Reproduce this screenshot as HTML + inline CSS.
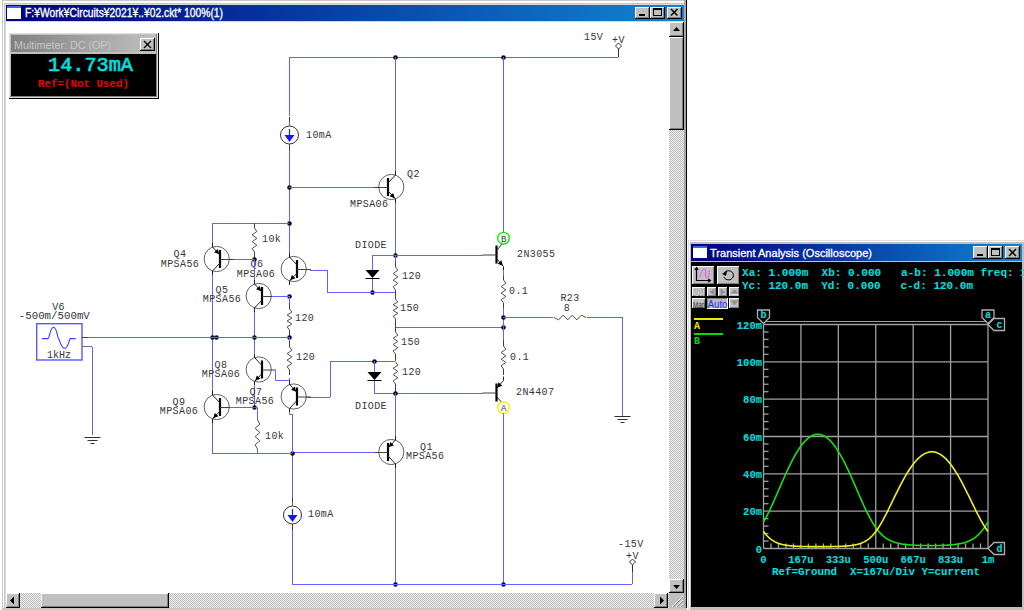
<!DOCTYPE html>
<html><head><meta charset="utf-8"><style>html,body{margin:0;padding:0;width:1024px;height:610px;overflow:hidden;background:#fff}svg{display:block} text{white-space:pre}</style></head>
<body><svg width="1024" height="610" viewBox="0 0 1024 610" shape-rendering="auto">
<rect x="0" y="0" width="1024" height="610" fill="#ffffff" />
<rect x="2" y="0" width="685" height="610" fill="#c8c8c8" />
<rect x="3" y="1" width="682" height="609" fill="#ffffff" />
<rect x="4" y="3" width="681" height="607" fill="#c8c8c8" />
<rect x="5" y="4" width="679" height="606" fill="#d8d8d8" />
<line x1="686.5" y1="0" x2="686.5" y2="610" stroke="#000" stroke-width="1" />
<rect x="684" y="0" width="2" height="610" fill="#a8a8a8" />
<defs><linearGradient id="tg" x1="0" x2="1" y1="0" y2="0"><stop offset="0" stop-color="#000080"/><stop offset="1" stop-color="#1084d0"/></linearGradient><linearGradient id="mg" x1="0" x2="1" y1="0" y2="0"><stop offset="0" stop-color="#808080"/><stop offset="1" stop-color="#c0c0c0"/></linearGradient><pattern id="dith" width="2" height="2" patternUnits="userSpaceOnUse"><rect width="2" height="2" fill="#f0f0f0"/><rect width="1" height="1" fill="#bcbcbc"/><rect x="1" y="1" width="1" height="1" fill="#bcbcbc"/></pattern></defs>
<rect x="6" y="5" width="678" height="16" fill="url(#tg)" />
<rect x="7" y="6" width="14" height="13" fill="#ffffff" />
<rect x="7" y="6" width="14" height="2" fill="#3a6ad8" />
<text x="25" y="16.6" font-family="Liberation Sans" font-size="12" fill="#ffffff" font-weight="normal" text-anchor="start" textLength="198" lengthAdjust="spacingAndGlyphs" stroke="#ffffff" stroke-width="0.35">F:¥Work¥Circuits¥2021¥..¥02.ckt* 100%(1)</text>
<rect x="635" y="7" width="15" height="12" fill="#000000" />
<rect x="635" y="7" width="14" height="11" fill="#ffffff" />
<rect x="636" y="8" width="13" height="10" fill="#808080" />
<rect x="636" y="8" width="12" height="9" fill="#c0c0c0" />
<rect x="639" y="14" width="6" height="2" fill="#000" />
<rect x="650" y="7" width="15" height="12" fill="#000000" />
<rect x="650" y="7" width="14" height="11" fill="#ffffff" />
<rect x="651" y="8" width="13" height="10" fill="#808080" />
<rect x="651" y="8" width="12" height="9" fill="#c0c0c0" />
<rect x="653" y="8" width="9" height="8" fill="#000" />
<rect x="654" y="10" width="7" height="5" fill="#c0c0c0" />
<rect x="667" y="7" width="15" height="12" fill="#000000" />
<rect x="667" y="7" width="14" height="11" fill="#ffffff" />
<rect x="668" y="8" width="13" height="10" fill="#808080" />
<rect x="668" y="8" width="12" height="9" fill="#c0c0c0" />
<line x1="671" y1="9" x2="677.5" y2="15.5" stroke="#000" stroke-width="1.5" />
<line x1="677.5" y1="9" x2="671" y2="15.5" stroke="#000" stroke-width="1.5" />
<rect x="6" y="22" width="663" height="571" fill="#ffffff" />
<rect x="669" y="22" width="15" height="571" fill="url(#dith)" />
<rect x="669" y="22" width="15" height="15" fill="#000000" />
<rect x="669" y="22" width="14" height="14" fill="#ffffff" />
<rect x="670" y="23" width="13" height="13" fill="#808080" />
<rect x="670" y="23" width="12" height="12" fill="#c0c0c0" />
<polygon points="676.5,27 680,31 673,31" fill="#000"/>
<rect x="669" y="37" width="15" height="93" fill="#000000" />
<rect x="669" y="37" width="14" height="92" fill="#ffffff" />
<rect x="670" y="38" width="13" height="91" fill="#808080" />
<rect x="670" y="38" width="12" height="90" fill="#c0c0c0" />
<rect x="669" y="579" width="15" height="14" fill="#000000" />
<rect x="669" y="579" width="14" height="13" fill="#ffffff" />
<rect x="670" y="580" width="13" height="12" fill="#808080" />
<rect x="670" y="580" width="12" height="11" fill="#c0c0c0" />
<polygon points="676.5,589 680,585 673,585" fill="#000"/>
<rect x="6" y="593" width="663" height="15" fill="url(#dith)" />
<rect x="6" y="593" width="14" height="15" fill="#000000" />
<rect x="6" y="593" width="13" height="14" fill="#ffffff" />
<rect x="7" y="594" width="12" height="13" fill="#808080" />
<rect x="7" y="594" width="11" height="12" fill="#c0c0c0" />
<polygon points="10,600.5 14,596.5 14,604.5" fill="#000"/>
<rect x="41" y="593" width="128" height="15" fill="#000000" />
<rect x="41" y="593" width="127" height="14" fill="#ffffff" />
<rect x="42" y="594" width="126" height="13" fill="#808080" />
<rect x="42" y="594" width="125" height="12" fill="#c0c0c0" />
<rect x="654" y="593" width="14" height="15" fill="#000000" />
<rect x="654" y="593" width="13" height="14" fill="#ffffff" />
<rect x="655" y="594" width="12" height="13" fill="#808080" />
<rect x="655" y="594" width="11" height="12" fill="#c0c0c0" />
<polygon points="664,600.5 660,596.5 660,604.5" fill="#000"/>
<rect x="669" y="593" width="15" height="15" fill="#c0c0c0" />
<line x1="672" y1="607" x2="683" y2="596" stroke="#ffffff" stroke-width="1" />
<line x1="673" y1="607" x2="683" y2="597" stroke="#808080" stroke-width="1" />
<line x1="676" y1="607" x2="683" y2="600" stroke="#ffffff" stroke-width="1" />
<line x1="677" y1="607" x2="683" y2="601" stroke="#808080" stroke-width="1" />
<line x1="680" y1="607" x2="683" y2="604" stroke="#ffffff" stroke-width="1" />
<line x1="681" y1="607" x2="683" y2="605" stroke="#808080" stroke-width="1" />
<rect x="2" y="608" width="685" height="2" fill="#c8c8c8" />
<line x1="289" y1="57.5" x2="618" y2="57.5" stroke="#6262ff" stroke-width="1" />
<circle cx="395.5" cy="57.5" r="2.3" fill="#08082a"/>
<circle cx="503.5" cy="57.5" r="2.3" fill="#08082a"/>
<polygon points="618.5,43 621.5,46 618.5,49 615.5,46" fill="#fff" stroke="#303030" stroke-width="1"/>
<line x1="618.5" y1="49" x2="618.5" y2="57" stroke="#303030" stroke-width="1" />
<text x="584" y="39.5" font-family="Liberation Mono" font-size="10" fill="#363636" font-weight="normal" text-anchor="start"  letter-spacing="0.4">15V</text>
<text x="612" y="42.5" font-family="Liberation Mono" font-size="10" fill="#363636" font-weight="normal" text-anchor="start"  letter-spacing="0.4">+V</text>
<line x1="289.5" y1="57" x2="289.5" y2="116" stroke="#6262ff" stroke-width="1" />
<circle cx="289.5" cy="135" r="9" fill="none" stroke="#303030" stroke-width="1"/>
<line x1="289.5" y1="129" x2="289.5" y2="135" stroke="#2020ff" stroke-width="1.2" />
<polygon points="284.5,135 294.5,135 289.5,142" fill="#1414ff"/>
<line x1="289.5" y1="126" x2="289.5" y2="117" stroke="#404040" stroke-width="1" />
<line x1="289.5" y1="126" x2="289.5" y2="122" stroke="#e04040" stroke-width="1" />
<line x1="289.5" y1="144" x2="289.5" y2="150" stroke="#404040" stroke-width="1" />
<text x="306" y="137.5" font-family="Liberation Mono" font-size="10" fill="#363636" font-weight="normal" text-anchor="start"  letter-spacing="0.4">10mA</text>
<line x1="289.5" y1="150" x2="289.5" y2="253" stroke="#6262ff" stroke-width="1" />
<circle cx="289.5" cy="187.5" r="2.3" fill="#08082a"/>
<circle cx="289.5" cy="223.5" r="2.3" fill="#08082a"/>
<line x1="289" y1="187.5" x2="375" y2="187.5" stroke="#6262ff" stroke-width="1" />
<circle cx="391.3" cy="187" r="12.6" fill="none" stroke="#606060" stroke-width="1"/>
<line x1="388.0" y1="178" x2="388.0" y2="196" stroke="#000" stroke-width="2.2" />
<line x1="388.0" y1="187.5" x2="374.0" y2="187.5" stroke="#404040" stroke-width="1" />
<line x1="388.0" y1="183" x2="395.5" y2="175" stroke="#202020" stroke-width="1" />
<line x1="395.5" y1="175" x2="395.5" y2="171" stroke="#202020" stroke-width="1" />
<line x1="388.0" y1="191" x2="395.5" y2="199" stroke="#202020" stroke-width="1" />
<line x1="395.5" y1="199" x2="395.5" y2="203" stroke="#202020" stroke-width="1" />
<polygon points="394.8160588711187,198.2704627958599 389.5725102163618,196.3326295973628 393.2201962370623,192.91292395295616" fill="#000"/>
<text x="407" y="176.5" font-family="Liberation Mono" font-size="10" fill="#363636" font-weight="normal" text-anchor="start"  letter-spacing="0.4">Q2</text>
<text x="350" y="206.5" font-family="Liberation Mono" font-size="10" fill="#363636" font-weight="normal" text-anchor="start"  letter-spacing="0.4">MPSA06</text>
<line x1="395.5" y1="57" x2="395.5" y2="171" stroke="#6262ff" stroke-width="1" />
<line x1="395.5" y1="203" x2="395.5" y2="255" stroke="#6262ff" stroke-width="1" />
<circle cx="395.5" cy="255.5" r="2.3" fill="#08082a"/>
<line x1="372" y1="255.5" x2="483" y2="255.5" stroke="#6262ff" stroke-width="1" />
<line x1="372.5" y1="255" x2="372.5" y2="270" stroke="#6262ff" stroke-width="1" />
<polygon points="365.5,270 379.5,270 372.5,278" fill="#000"/>
<line x1="365.5" y1="278.5" x2="379.5" y2="278.5" stroke="#000" stroke-width="1" />
<line x1="372.5" y1="279" x2="372.5" y2="292" stroke="#6262ff" stroke-width="1" />
<circle cx="372.5" cy="292.5" r="2.3" fill="#08082a"/>
<line x1="395.5" y1="255" x2="395.5" y2="261" stroke="#6262ff" stroke-width="1" />
<line x1="395.5" y1="261" x2="395.5" y2="267" stroke="#404040" stroke-width="1" />
<polyline points="395.5,267 397.9,270.2857142857143 393.1,273.57142857142856 397.9,276.85714285714283 393.1,280.14285714285717 397.9,283.42857142857144 393.1,286.7142857142857 395.5,290" stroke="#505050" stroke-width="1" fill="none" />
<line x1="395.5" y1="290" x2="395.5" y2="292" stroke="#404040" stroke-width="1" />
<text x="402" y="278.5" font-family="Liberation Mono" font-size="10" fill="#363636" font-weight="normal" text-anchor="start"  letter-spacing="0.4">120</text>
<line x1="327" y1="292.5" x2="395" y2="292.5" stroke="#6262ff" stroke-width="1" />
<line x1="327.5" y1="270" x2="327.5" y2="292" stroke="#6262ff" stroke-width="1" />
<line x1="310" y1="270.5" x2="327" y2="270.5" stroke="#6262ff" stroke-width="1" />
<line x1="395.5" y1="292" x2="395.5" y2="299" stroke="#404040" stroke-width="1" />
<polyline points="395.5,299 397.9,301.85714285714283 393.1,304.7142857142857 397.9,307.57142857142856 393.1,310.42857142857144 397.9,313.2857142857143 393.1,316.14285714285717 395.5,319" stroke="#505050" stroke-width="1" fill="none" />
<line x1="395.5" y1="319" x2="395.5" y2="327" stroke="#404040" stroke-width="1" />
<text x="400" y="310.5" font-family="Liberation Mono" font-size="10" fill="#363636" font-weight="normal" text-anchor="start"  letter-spacing="0.4">150</text>
<line x1="395" y1="327.5" x2="503" y2="327.5" stroke="#6262ff" stroke-width="1" />
<circle cx="503.5" cy="327.5" r="2.3" fill="#08082a"/>
<line x1="395.5" y1="327" x2="395.5" y2="332" stroke="#404040" stroke-width="1" />
<polyline points="395.5,332 397.9,335.14285714285717 393.1,338.2857142857143 397.9,341.42857142857144 393.1,344.57142857142856 397.9,347.7142857142857 393.1,350.85714285714283 395.5,354" stroke="#505050" stroke-width="1" fill="none" />
<line x1="395.5" y1="354" x2="395.5" y2="361" stroke="#404040" stroke-width="1" />
<text x="401" y="344.5" font-family="Liberation Mono" font-size="10" fill="#363636" font-weight="normal" text-anchor="start"  letter-spacing="0.4">150</text>
<line x1="330" y1="361.5" x2="395" y2="361.5" stroke="#6262ff" stroke-width="1" />
<circle cx="374.5" cy="361.5" r="2.3" fill="#08082a"/>
<line x1="330.5" y1="361" x2="330.5" y2="397" stroke="#6262ff" stroke-width="1" />
<line x1="306" y1="397.5" x2="330" y2="397.5" stroke="#6262ff" stroke-width="1" />
<line x1="374.5" y1="361" x2="374.5" y2="372" stroke="#6262ff" stroke-width="1" />
<polygon points="367.5,372 381.5,372 374.5,380" fill="#000"/>
<line x1="367.5" y1="380.5" x2="381.5" y2="380.5" stroke="#000" stroke-width="1" />
<line x1="374.5" y1="381" x2="374.5" y2="393" stroke="#6262ff" stroke-width="1" />
<polyline points="395.5,362 397.9,365.14285714285717 393.1,368.2857142857143 397.9,371.42857142857144 393.1,374.57142857142856 397.9,377.7142857142857 393.1,380.85714285714283 395.5,384" stroke="#505050" stroke-width="1" fill="none" />
<line x1="395.5" y1="384" x2="395.5" y2="393" stroke="#404040" stroke-width="1" />
<text x="402" y="374.5" font-family="Liberation Mono" font-size="10" fill="#363636" font-weight="normal" text-anchor="start"  letter-spacing="0.4">120</text>
<line x1="374" y1="393.5" x2="483" y2="393.5" stroke="#6262ff" stroke-width="1" />
<circle cx="395.5" cy="393.5" r="2.3" fill="#08082a"/>
<text x="355" y="408.5" font-family="Liberation Mono" font-size="10" fill="#363636" font-weight="normal" text-anchor="start"  letter-spacing="0.4">DIODE</text>
<text x="355" y="247.5" font-family="Liberation Mono" font-size="10" fill="#363636" font-weight="normal" text-anchor="start"  letter-spacing="0.4">DIODE</text>
<line x1="395.5" y1="393" x2="395.5" y2="436" stroke="#6262ff" stroke-width="1" />
<circle cx="391.3" cy="452" r="12.6" fill="none" stroke="#606060" stroke-width="1"/>
<line x1="388.0" y1="443" x2="388.0" y2="461" stroke="#000" stroke-width="2.2" />
<line x1="388.0" y1="452.5" x2="374.0" y2="452.5" stroke="#404040" stroke-width="1" />
<line x1="388.0" y1="448" x2="395.5" y2="440" stroke="#202020" stroke-width="1" />
<line x1="395.5" y1="440" x2="395.5" y2="436" stroke="#202020" stroke-width="1" />
<line x1="388.0" y1="456" x2="395.5" y2="464" stroke="#202020" stroke-width="1" />
<line x1="395.5" y1="464" x2="395.5" y2="468" stroke="#202020" stroke-width="1" />
<polygon points="388.6839411288813,447.27046279585994 390.2798037629377,441.9129239529562 393.9274897836382,445.3326295973629" fill="#000"/>
<text x="420" y="449.5" font-family="Liberation Mono" font-size="10" fill="#363636" font-weight="normal" text-anchor="start"  letter-spacing="0.4">Q1</text>
<text x="406" y="458.5" font-family="Liberation Mono" font-size="10" fill="#363636" font-weight="normal" text-anchor="start"  letter-spacing="0.4">MPSA56</text>
<line x1="292" y1="452.5" x2="375" y2="452.5" stroke="#6262ff" stroke-width="1" />
<line x1="395.5" y1="468" x2="395.5" y2="584" stroke="#6262ff" stroke-width="1" />
<circle cx="395.5" cy="584.5" r="2.3" fill="#08082a"/>
<line x1="503.5" y1="57" x2="503.5" y2="232" stroke="#6262ff" stroke-width="1" />
<line x1="496.5" y1="245.5" x2="496.5" y2="263.5" stroke="#000" stroke-width="2.2" />
<line x1="496.5" y1="255.0" x2="482.5" y2="255.0" stroke="#404040" stroke-width="1" />
<line x1="496.5" y1="250.5" x2="503.5" y2="242.5" stroke="#202020" stroke-width="1" />
<line x1="503.5" y1="242.5" x2="503.5" y2="238.5" stroke="#202020" stroke-width="1" />
<line x1="496.5" y1="258.5" x2="503.5" y2="266.5" stroke="#202020" stroke-width="1" />
<line x1="503.5" y1="266.5" x2="503.5" y2="270.5" stroke="#202020" stroke-width="1" />
<polygon points="502.8414953921315,265.7474233052931 497.6675306160217,263.63080135143 501.4304140895561,260.3382783120875" fill="#000"/>
<circle cx="503.5" cy="238.2" r="5.8" fill="#fff" stroke="#10f010" stroke-width="1.4"/>
<text x="503.8" y="241.5" font-family="Liberation Mono" font-size="9" fill="#363636" font-weight="normal" text-anchor="middle" >B</text>
<text x="517" y="256.5" font-family="Liberation Mono" font-size="10" fill="#363636" font-weight="normal" text-anchor="start"  letter-spacing="0.4">2N3055</text>
<line x1="503.5" y1="271" x2="503.5" y2="276" stroke="#6262ff" stroke-width="1" />
<line x1="503.5" y1="276" x2="503.5" y2="280" stroke="#404040" stroke-width="1" />
<polyline points="503.5,280 505.9,283.2857142857143 501.1,286.57142857142856 505.9,289.85714285714283 501.1,293.14285714285717 505.9,296.42857142857144 501.1,299.7142857142857 503.5,303" stroke="#505050" stroke-width="1" fill="none" />
<line x1="503.5" y1="303" x2="503.5" y2="308" stroke="#404040" stroke-width="1" />
<text x="509" y="293.5" font-family="Liberation Mono" font-size="10" fill="#363636" font-weight="normal" text-anchor="start"  letter-spacing="0.4">0.1</text>
<line x1="503.5" y1="308" x2="503.5" y2="340" stroke="#6262ff" stroke-width="1" />
<circle cx="503.5" cy="317.5" r="2.3" fill="#08082a"/>
<line x1="503" y1="317.5" x2="553" y2="317.5" stroke="#6262ff" stroke-width="1" />
<polyline points="554,317.5 558.5714285714286,319.9 563.1428571428571,315.1 567.7142857142857,319.9 572.2857142857143,315.1 576.8571428571429,319.9 581.4285714285714,315.1 586,317.5" stroke="#505050" stroke-width="1" fill="none" />
<line x1="587" y1="317.5" x2="622" y2="317.5" stroke="#6262ff" stroke-width="1" />
<text x="570" y="300.5" font-family="Liberation Mono" font-size="10" fill="#363636" font-weight="normal" text-anchor="middle"  letter-spacing="0.4">R23</text>
<text x="567" y="310.5" font-family="Liberation Mono" font-size="10" fill="#363636" font-weight="normal" text-anchor="middle"  letter-spacing="0.4">8</text>
<line x1="622.5" y1="317" x2="622.5" y2="417" stroke="#6262ff" stroke-width="1" />
<line x1="614.5" y1="416.5" x2="630.5" y2="416.5" stroke="#303030" stroke-width="1" />
<line x1="617.5" y1="419.5" x2="627.5" y2="419.5" stroke="#303030" stroke-width="1" />
<line x1="620.5" y1="422.5" x2="624.5" y2="422.5" stroke="#303030" stroke-width="1" />
<line x1="503.5" y1="340" x2="503.5" y2="346" stroke="#404040" stroke-width="1" />
<polyline points="503.5,346 505.9,349.2857142857143 501.1,352.57142857142856 505.9,355.85714285714283 501.1,359.14285714285717 505.9,362.42857142857144 501.1,365.7142857142857 503.5,369" stroke="#505050" stroke-width="1" fill="none" />
<line x1="503.5" y1="369" x2="503.5" y2="375" stroke="#404040" stroke-width="1" />
<text x="510" y="359.5" font-family="Liberation Mono" font-size="10" fill="#363636" font-weight="normal" text-anchor="start"  letter-spacing="0.4">0.1</text>
<line x1="496.5" y1="383.5" x2="496.5" y2="401.5" stroke="#000" stroke-width="2.2" />
<line x1="496.5" y1="393.0" x2="482.5" y2="393.0" stroke="#404040" stroke-width="1" />
<line x1="496.5" y1="388.5" x2="503.5" y2="380.5" stroke="#202020" stroke-width="1" />
<line x1="503.5" y1="380.5" x2="503.5" y2="376.5" stroke="#202020" stroke-width="1" />
<line x1="496.5" y1="396.5" x2="503.5" y2="404.5" stroke="#202020" stroke-width="1" />
<line x1="503.5" y1="404.5" x2="503.5" y2="408.5" stroke="#202020" stroke-width="1" />
<polygon points="497.1585046078685,387.7474233052931 498.5695859104439,382.3382783120875 502.3324693839783,385.63080135143" fill="#000"/>
<text x="516" y="394.5" font-family="Liberation Mono" font-size="10" fill="#363636" font-weight="normal" text-anchor="start"  letter-spacing="0.4">2N4407</text>
<circle cx="503.5" cy="407.6" r="5.8" fill="#fff" stroke="#f0f000" stroke-width="1.4"/>
<text x="503.8" y="411" font-family="Liberation Mono" font-size="9" fill="#363636" font-weight="normal" text-anchor="middle" >A</text>
<line x1="503.5" y1="413" x2="503.5" y2="584" stroke="#6262ff" stroke-width="1" />
<circle cx="503.5" cy="584.5" r="2.3" fill="#08082a"/>
<line x1="292" y1="584.5" x2="632" y2="584.5" stroke="#6262ff" stroke-width="1" />
<line x1="632.5" y1="572" x2="632.5" y2="584" stroke="#6262ff" stroke-width="1" />
<line x1="632.5" y1="565" x2="632.5" y2="572" stroke="#303030" stroke-width="1" />
<polygon points="632.5,559 635.5,562 632.5,565 629.5,562" fill="#fff" stroke="#303030" stroke-width="1"/>
<text x="618" y="546.5" font-family="Liberation Mono" font-size="10" fill="#363636" font-weight="normal" text-anchor="start"  letter-spacing="0.4">-15V</text>
<text x="626" y="558.5" font-family="Liberation Mono" font-size="10" fill="#363636" font-weight="normal" text-anchor="start"  letter-spacing="0.4">+V</text>
<line x1="292.5" y1="414" x2="292.5" y2="499" stroke="#6262ff" stroke-width="1" />
<circle cx="292.5" cy="515" r="9" fill="none" stroke="#303030" stroke-width="1"/>
<line x1="292.5" y1="509" x2="292.5" y2="515" stroke="#2020ff" stroke-width="1.2" />
<polygon points="287.5,515 297.5,515 292.5,522" fill="#1414ff"/>
<line x1="292.5" y1="506" x2="292.5" y2="497" stroke="#404040" stroke-width="1" />
<line x1="292.5" y1="506" x2="292.5" y2="502" stroke="#e04040" stroke-width="1" />
<line x1="292.5" y1="524" x2="292.5" y2="530" stroke="#404040" stroke-width="1" />
<text x="308" y="516.5" font-family="Liberation Mono" font-size="10" fill="#363636" font-weight="normal" text-anchor="start"  letter-spacing="0.4">10mA</text>
<line x1="292.5" y1="530" x2="292.5" y2="584" stroke="#6262ff" stroke-width="1" />
<circle cx="292.5" cy="453.5" r="2.3" fill="#08082a"/>
<line x1="212" y1="223.5" x2="289" y2="223.5" stroke="#6262ff" stroke-width="1" />
<polyline points="254.5,228 256.9,231.42857142857142 252.1,234.85714285714286 256.9,238.28571428571428 252.1,241.71428571428572 256.9,245.14285714285714 252.1,248.57142857142856 254.5,252" stroke="#505050" stroke-width="1" fill="none" />
<line x1="254.5" y1="252" x2="254.5" y2="259" stroke="#404040" stroke-width="1" />
<text x="262" y="241.5" font-family="Liberation Mono" font-size="10" fill="#363636" font-weight="normal" text-anchor="start"  letter-spacing="0.4">10k</text>
<line x1="254.5" y1="223" x2="254.5" y2="228" stroke="#404040" stroke-width="1" />
<circle cx="254.5" cy="259.5" r="2.3" fill="#08082a"/>
<circle cx="216.7" cy="259" r="12.6" fill="none" stroke="#606060" stroke-width="1"/>
<line x1="220.0" y1="250" x2="220.0" y2="268" stroke="#000" stroke-width="2.2" />
<line x1="220.0" y1="259.5" x2="234.0" y2="259.5" stroke="#404040" stroke-width="1" />
<line x1="220.0" y1="255" x2="212.5" y2="247" stroke="#202020" stroke-width="1" />
<line x1="212.5" y1="247" x2="212.5" y2="243" stroke="#202020" stroke-width="1" />
<line x1="220.0" y1="263" x2="212.5" y2="271" stroke="#202020" stroke-width="1" />
<line x1="212.5" y1="271" x2="212.5" y2="275" stroke="#202020" stroke-width="1" />
<polygon points="219.31605887111866,254.2704627958599 214.0725102163618,252.3326295973628 217.7201962370622,248.91292395295616" fill="#000"/>
<text x="180" y="256.5" font-family="Liberation Mono" font-size="10" fill="#363636" font-weight="normal" text-anchor="middle"  letter-spacing="0.4">Q4</text>
<text x="180" y="266.5" font-family="Liberation Mono" font-size="10" fill="#363636" font-weight="normal" text-anchor="middle"  letter-spacing="0.4">MPSA56</text>
<line x1="234" y1="259.5" x2="254" y2="259.5" stroke="#6262ff" stroke-width="1" />
<line x1="212.5" y1="223" x2="212.5" y2="243" stroke="#6262ff" stroke-width="1" />
<line x1="212.5" y1="275" x2="212.5" y2="391" stroke="#6262ff" stroke-width="1" />
<circle cx="212.5" cy="337.5" r="2.3" fill="#08082a"/>
<circle cx="216.5" cy="337.5" r="2.3" fill="#08082a"/>
<circle cx="293.7" cy="269" r="12.6" fill="none" stroke="#606060" stroke-width="1"/>
<line x1="297.0" y1="260" x2="297.0" y2="278" stroke="#000" stroke-width="2.2" />
<line x1="297.0" y1="269.5" x2="311.0" y2="269.5" stroke="#404040" stroke-width="1" />
<line x1="297.0" y1="265" x2="289.5" y2="257" stroke="#202020" stroke-width="1" />
<line x1="289.5" y1="257" x2="289.5" y2="253" stroke="#202020" stroke-width="1" />
<line x1="297.0" y1="273" x2="289.5" y2="281" stroke="#202020" stroke-width="1" />
<line x1="289.5" y1="281" x2="289.5" y2="285" stroke="#202020" stroke-width="1" />
<polygon points="290.1839411288813,280.27046279585994 291.7798037629377,274.9129239529562 295.4274897836382,278.3326295973629" fill="#000"/>
<text x="257" y="266.5" font-family="Liberation Mono" font-size="10" fill="#363636" font-weight="normal" text-anchor="middle"  letter-spacing="0.4">Q6</text>
<text x="256" y="276.5" font-family="Liberation Mono" font-size="10" fill="#363636" font-weight="normal" text-anchor="middle"  letter-spacing="0.4">MPSA06</text>
<circle cx="289.5" cy="296.5" r="2.3" fill="#08082a"/>
<line x1="289.5" y1="296" x2="289.5" y2="303" stroke="#6262ff" stroke-width="1" />
<line x1="289.5" y1="303" x2="289.5" y2="309" stroke="#404040" stroke-width="1" />
<polyline points="289.5,309 291.9,312.0 287.1,315.0 291.9,318.0 287.1,321.0 291.9,324.0 287.1,327.0 289.5,330" stroke="#505050" stroke-width="1" fill="none" />
<line x1="289.5" y1="330" x2="289.5" y2="337" stroke="#404040" stroke-width="1" />
<text x="295" y="320.5" font-family="Liberation Mono" font-size="10" fill="#363636" font-weight="normal" text-anchor="start"  letter-spacing="0.4">120</text>
<circle cx="289.5" cy="337.5" r="2.3" fill="#08082a"/>
<line x1="289.5" y1="337" x2="289.5" y2="341" stroke="#6262ff" stroke-width="1" />
<line x1="289.5" y1="341" x2="289.5" y2="347" stroke="#404040" stroke-width="1" />
<polyline points="289.5,347 291.9,350.2857142857143 287.1,353.57142857142856 291.9,356.85714285714283 287.1,360.14285714285717 291.9,363.42857142857144 287.1,366.7142857142857 289.5,370" stroke="#505050" stroke-width="1" fill="none" />
<line x1="289.5" y1="370" x2="289.5" y2="375" stroke="#404040" stroke-width="1" />
<text x="296" y="359.5" font-family="Liberation Mono" font-size="10" fill="#363636" font-weight="normal" text-anchor="start"  letter-spacing="0.4">120</text>
<line x1="289.5" y1="378" x2="289.5" y2="381" stroke="#6262ff" stroke-width="1" />
<line x1="254.5" y1="259" x2="254.5" y2="280" stroke="#6262ff" stroke-width="1" />
<circle cx="258.7" cy="296" r="12.6" fill="none" stroke="#606060" stroke-width="1"/>
<line x1="262.0" y1="287" x2="262.0" y2="305" stroke="#000" stroke-width="2.2" />
<line x1="262.0" y1="296.5" x2="276.0" y2="296.5" stroke="#404040" stroke-width="1" />
<line x1="262.0" y1="292" x2="254.5" y2="284" stroke="#202020" stroke-width="1" />
<line x1="254.5" y1="284" x2="254.5" y2="280" stroke="#202020" stroke-width="1" />
<line x1="262.0" y1="300" x2="254.5" y2="308" stroke="#202020" stroke-width="1" />
<line x1="254.5" y1="308" x2="254.5" y2="312" stroke="#202020" stroke-width="1" />
<polygon points="261.3160588711187,291.27046279585994 256.0725102163618,289.3326295973629 259.7201962370623,285.9129239529562" fill="#000"/>
<line x1="272" y1="296.5" x2="289" y2="296.5" stroke="#6262ff" stroke-width="1" />
<text x="222" y="292.5" font-family="Liberation Mono" font-size="10" fill="#363636" font-weight="normal" text-anchor="middle"  letter-spacing="0.4">Q5</text>
<text x="222" y="301.5" font-family="Liberation Mono" font-size="10" fill="#363636" font-weight="normal" text-anchor="middle"  letter-spacing="0.4">MPSA56</text>
<line x1="254.5" y1="312" x2="254.5" y2="353" stroke="#6262ff" stroke-width="1" />
<circle cx="254.5" cy="337.5" r="2.3" fill="#08082a"/>
<line x1="88" y1="337.5" x2="289" y2="337.5" stroke="#6262ff" stroke-width="1" />
<circle cx="258.7" cy="369.5" r="12.6" fill="none" stroke="#606060" stroke-width="1"/>
<line x1="262.0" y1="360.5" x2="262.0" y2="378.5" stroke="#000" stroke-width="2.2" />
<line x1="262.0" y1="370.0" x2="276.0" y2="370.0" stroke="#404040" stroke-width="1" />
<line x1="262.0" y1="365.5" x2="254.5" y2="357.5" stroke="#202020" stroke-width="1" />
<line x1="254.5" y1="357.5" x2="254.5" y2="353.5" stroke="#202020" stroke-width="1" />
<line x1="262.0" y1="373.5" x2="254.5" y2="381.5" stroke="#202020" stroke-width="1" />
<line x1="254.5" y1="381.5" x2="254.5" y2="385.5" stroke="#202020" stroke-width="1" />
<polygon points="255.18394112888134,380.77046279585994 256.7798037629378,375.4129239529562 260.42748978363824,378.8326295973629" fill="#000"/>
<text x="221" y="367.5" font-family="Liberation Mono" font-size="10" fill="#363636" font-weight="normal" text-anchor="middle"  letter-spacing="0.4">Q8</text>
<text x="221" y="376.5" font-family="Liberation Mono" font-size="10" fill="#363636" font-weight="normal" text-anchor="middle"  letter-spacing="0.4">MPSA06</text>
<line x1="274" y1="370.5" x2="274" y2="370.5" stroke="#6262ff" stroke-width="1" />
<polyline points="275,370.5 275.5,370.5 275.5,380.5 289,380.5" stroke="#6262ff" fill="none"/>
<line x1="254.5" y1="386" x2="254.5" y2="407" stroke="#6262ff" stroke-width="1" />
<circle cx="254.5" cy="407.5" r="2.3" fill="#08082a"/>
<circle cx="293.7" cy="396.5" r="12.6" fill="none" stroke="#606060" stroke-width="1"/>
<line x1="297.0" y1="387.5" x2="297.0" y2="405.5" stroke="#000" stroke-width="2.2" />
<line x1="297.0" y1="397.0" x2="311.0" y2="397.0" stroke="#404040" stroke-width="1" />
<line x1="297.0" y1="392.5" x2="289.5" y2="384.5" stroke="#202020" stroke-width="1" />
<line x1="289.5" y1="384.5" x2="289.5" y2="380.5" stroke="#202020" stroke-width="1" />
<line x1="297.0" y1="400.5" x2="289.5" y2="408.5" stroke="#202020" stroke-width="1" />
<line x1="289.5" y1="408.5" x2="289.5" y2="412.5" stroke="#202020" stroke-width="1" />
<polygon points="296.3160588711187,391.77046279585994 291.0725102163618,389.8326295973629 294.7201962370623,386.4129239529562" fill="#000"/>
<text x="256" y="394.5" font-family="Liberation Mono" font-size="10" fill="#363636" font-weight="normal" text-anchor="middle"  letter-spacing="0.4">Q7</text>
<text x="255" y="403.5" font-family="Liberation Mono" font-size="10" fill="#363636" font-weight="normal" text-anchor="middle"  letter-spacing="0.4">MPSA56</text>
<polyline points="289.5,412.5 289.5,414.5 292.5,414.5" stroke="#6262ff" fill="none"/>
<line x1="292.5" y1="414" x2="292.5" y2="453" stroke="#6262ff" stroke-width="1" />
<circle cx="216.7" cy="407" r="12.6" fill="none" stroke="#606060" stroke-width="1"/>
<line x1="220.0" y1="398" x2="220.0" y2="416" stroke="#000" stroke-width="2.2" />
<line x1="220.0" y1="407.5" x2="234.0" y2="407.5" stroke="#404040" stroke-width="1" />
<line x1="220.0" y1="403" x2="212.5" y2="395" stroke="#202020" stroke-width="1" />
<line x1="212.5" y1="395" x2="212.5" y2="391" stroke="#202020" stroke-width="1" />
<line x1="220.0" y1="411" x2="212.5" y2="419" stroke="#202020" stroke-width="1" />
<line x1="212.5" y1="419" x2="212.5" y2="423" stroke="#202020" stroke-width="1" />
<polygon points="213.18394112888134,418.27046279585994 214.7798037629378,412.9129239529562 218.4274897836382,416.3326295973629" fill="#000"/>
<text x="179" y="404.5" font-family="Liberation Mono" font-size="10" fill="#363636" font-weight="normal" text-anchor="middle"  letter-spacing="0.4">Q9</text>
<text x="179" y="413.5" font-family="Liberation Mono" font-size="10" fill="#363636" font-weight="normal" text-anchor="middle"  letter-spacing="0.4">MPSA06</text>
<line x1="230" y1="407.5" x2="254" y2="407.5" stroke="#6262ff" stroke-width="1" />
<polyline points="254.5,407.5 257.5,407.5 257.5,420" stroke="#6262ff" fill="none"/>
<polyline points="257.5,420 259.9,424.14285714285717 255.1,428.2857142857143 259.9,432.42857142857144 255.1,436.57142857142856 259.9,440.7142857142857 255.1,444.8571428571429 257.5,449" stroke="#505050" stroke-width="1" fill="none" />
<text x="265" y="438.5" font-family="Liberation Mono" font-size="10" fill="#363636" font-weight="normal" text-anchor="start"  letter-spacing="0.4">10k</text>
<line x1="212.5" y1="423" x2="212.5" y2="453" stroke="#6262ff" stroke-width="1" />
<line x1="212" y1="453.5" x2="292" y2="453.5" stroke="#6262ff" stroke-width="1" />
<line x1="257.5" y1="449" x2="257.5" y2="453" stroke="#6262ff" stroke-width="1" />
<rect x="36.7" y="323.7" width="45.3" height="36.3" fill="#fff" stroke="#5858ff" stroke-width="1.4"/>
<path d="M42,338.6 H48 C49.5,338.6 50,327.2 53.5,327.2 C57,327.2 57.5,338 58.5,338.5 C59.5,339 61,348.3 64.8,348.3 C68.5,348.3 69,338.6 70.3,338.6 H75.7" fill="none" stroke="#3838ff" stroke-width="1.1"/>
<text x="59" y="357.5" font-family="Liberation Mono" font-size="10.5" fill="#363636" font-weight="normal" text-anchor="middle" textLength="24" lengthAdjust="spacingAndGlyphs">1kHz</text>
<text x="58.6" y="309.5" font-family="Liberation Mono" font-size="10" fill="#363636" font-weight="normal" text-anchor="middle"  letter-spacing="0.4">V6</text>
<text x="54.3" y="318.6" font-family="Liberation Mono" font-size="10.5" fill="#363636" font-weight="normal" text-anchor="middle" textLength="71" lengthAdjust="spacingAndGlyphs">-500m/500mV</text>
<line x1="82" y1="337.5" x2="88" y2="337.5" stroke="#404040" stroke-width="1" />
<line x1="82" y1="346.5" x2="88" y2="346.5" stroke="#707070" stroke-width="1" />
<line x1="88" y1="346.5" x2="92" y2="346.5" stroke="#6262ff" stroke-width="1" />
<line x1="92.5" y1="347" x2="92.5" y2="435" stroke="#6262ff" stroke-width="1" />
<line x1="84.5" y1="437.5" x2="100.5" y2="437.5" stroke="#303030" stroke-width="1" />
<line x1="87.5" y1="440.5" x2="97.5" y2="440.5" stroke="#303030" stroke-width="1" />
<line x1="90.5" y1="443.5" x2="94.5" y2="443.5" stroke="#303030" stroke-width="1" />
<rect x="9" y="33" width="150" height="66" fill="#000000" />
<rect x="9" y="33" width="149" height="65" fill="#dfdfdf" />
<rect x="10" y="34" width="147" height="63" fill="#808080" />
<rect x="10" y="34" width="146" height="62" fill="#c0c0c0" />
<rect x="11" y="35" width="145" height="17" fill="url(#mg)" />
<text x="14" y="49" font-family="Liberation Sans" font-size="11.5" fill="#c8c8c8" font-weight="normal" text-anchor="start" textLength="97" lengthAdjust="spacingAndGlyphs">Multimeter: DC (OP)</text>
<rect x="140" y="38" width="15" height="13" fill="#000000" />
<rect x="140" y="38" width="14" height="12" fill="#ffffff" />
<rect x="141" y="39" width="13" height="11" fill="#808080" />
<rect x="141" y="39" width="12" height="10" fill="#c0c0c0" />
<line x1="144" y1="41" x2="151" y2="48" stroke="#000" stroke-width="1.3" />
<line x1="151" y1="41" x2="144" y2="48" stroke="#000" stroke-width="1.3" />
<rect x="11" y="54" width="145" height="42" fill="#000" />
<text x="48" y="71" font-family="Liberation Mono" font-size="20" fill="#00e0e0" font-weight="normal" text-anchor="start" textLength="85" lengthAdjust="spacingAndGlyphs" stroke="#00e0e0" stroke-width="0.6">14.73mA</text>
<text x="38" y="87" font-family="Liberation Mono" font-size="11" fill="#ee0000" font-weight="bold" text-anchor="start" textLength="91" lengthAdjust="spacingAndGlyphs">Ref=(Not Used)</text>
<rect x="688" y="240" width="336" height="370" fill="#c0c0c0" />
<rect x="688" y="240" width="336" height="1" fill="#dfdfdf" />
<rect x="689" y="241" width="335" height="1" fill="#ffffff" />
<rect x="688" y="240" width="1" height="370" fill="#dfdfdf" />
<rect x="689" y="241" width="1" height="369" fill="#ffffff" />
<rect x="691" y="244" width="331" height="17" fill="url(#tg)" />
<rect x="693" y="246" width="14" height="12" fill="#ffffff" />
<rect x="693" y="246" width="14" height="2" fill="#3a6ad8" />
<text x="710" y="256.5" font-family="Liberation Sans" font-size="11.5" fill="#ffffff" font-weight="normal" text-anchor="start" textLength="162" lengthAdjust="spacingAndGlyphs" stroke="#ffffff" stroke-width="0.3">Transient Analysis (Oscilloscope)</text>
<rect x="973" y="246" width="15" height="13" fill="#000000" />
<rect x="973" y="246" width="14" height="12" fill="#ffffff" />
<rect x="974" y="247" width="13" height="11" fill="#808080" />
<rect x="974" y="247" width="12" height="10" fill="#c0c0c0" />
<rect x="977" y="254" width="6" height="2" fill="#000" />
<rect x="988" y="246" width="15" height="13" fill="#000000" />
<rect x="988" y="246" width="14" height="12" fill="#ffffff" />
<rect x="989" y="247" width="13" height="11" fill="#808080" />
<rect x="989" y="247" width="12" height="10" fill="#c0c0c0" />
<rect x="991" y="248" width="9" height="8" fill="#000" />
<rect x="992" y="250" width="7" height="5" fill="#c0c0c0" />
<rect x="1005" y="246" width="15" height="13" fill="#000000" />
<rect x="1005" y="246" width="14" height="12" fill="#ffffff" />
<rect x="1006" y="247" width="13" height="11" fill="#808080" />
<rect x="1006" y="247" width="12" height="10" fill="#c0c0c0" />
<line x1="1009" y1="249" x2="1016" y2="256" stroke="#000" stroke-width="1.5" />
<line x1="1016" y1="249" x2="1009" y2="256" stroke="#000" stroke-width="1.5" />
<rect x="691" y="262" width="331" height="345" fill="#000000" />
<rect x="692" y="266" width="23" height="19" fill="#000000" />
<rect x="692" y="266" width="22" height="18" fill="#ffffff" />
<rect x="693" y="267" width="21" height="17" fill="#808080" />
<rect x="693" y="267" width="20" height="16" fill="#c0c0c0" />
<path d="M696.5,268 V280.5 H710" fill="none" stroke="#000" stroke-width="1.2"/>
<polygon points="696.5,266.5 694.3,270 698.7,270" fill="#000"/><polygon points="711.5,280.5 708,278.3 708,282.7" fill="#000"/>
<path d="M700,277 C701,272 702,270 704,269.5 C706,269 706,272 705.5,274 C705,276 706,278 707.5,277 C709,276 709.5,272 709.5,270" fill="none" stroke="#ff30ff" stroke-width="1.1" stroke-dasharray="1.3 0.7"/>
<rect x="717" y="266" width="23" height="19" fill="#000000" />
<rect x="717" y="266" width="22" height="18" fill="#ffffff" />
<rect x="718" y="267" width="21" height="17" fill="#808080" />
<rect x="718" y="267" width="20" height="16" fill="#c0c0c0" />
<path d="M724.5,272.5 A5,4.6 0 1 1 723.8,277" fill="none" stroke="#000" stroke-width="1"/>
<polygon points="722,274 727,271 726,276" fill="#000"/>
<rect x="692" y="287" width="14" height="10" fill="#000000" />
<rect x="692" y="287" width="13" height="9" fill="#ffffff" />
<rect x="693" y="288" width="12" height="8" fill="#808080" />
<rect x="693" y="288" width="11" height="7" fill="#c0c0c0" />
<text x="693.2" y="295.5" font-family="Liberation Sans" font-size="9.5" fill="#ffffff" font-weight="bold" text-anchor="start" textLength="11.5" lengthAdjust="spacingAndGlyphs" stroke="#909090" stroke-width="0.5">Off</text>
<rect x="707" y="287" width="10" height="10" fill="#000000" />
<rect x="707" y="287" width="9" height="9" fill="#ffffff" />
<rect x="708" y="288" width="8" height="8" fill="#808080" />
<rect x="708" y="288" width="7" height="7" fill="#c0c0c0" />
<polygon points="709.5,292 714.5,288.5 714.5,295.5" fill="#909090"/>
<rect x="718" y="287" width="10" height="10" fill="#000000" />
<rect x="718" y="287" width="9" height="9" fill="#ffffff" />
<rect x="719" y="288" width="8" height="8" fill="#808080" />
<rect x="719" y="288" width="7" height="7" fill="#c0c0c0" />
<polygon points="725.5,292 720.5,288.5 720.5,295.5" fill="#909090"/>
<rect x="729" y="287" width="11" height="10" fill="#000000" />
<rect x="729" y="287" width="10" height="9" fill="#ffffff" />
<rect x="730" y="288" width="9" height="8" fill="#808080" />
<rect x="730" y="288" width="8" height="7" fill="#c0c0c0" />
<polygon points="734.5,289 738.5,293.5 730.5,293.5" fill="#909090"/><rect x="730.5" y="294.5" width="8" height="1" fill="#ffffff"/>
<rect x="692" y="298" width="14" height="11" fill="#000000" />
<rect x="692" y="298" width="13" height="10" fill="#ffffff" />
<rect x="693" y="299" width="12" height="9" fill="#808080" />
<rect x="693" y="299" width="11" height="8" fill="#c0c0c0" />
<text x="693" y="307.5" font-family="Liberation Sans" font-size="9" fill="#303030" font-weight="normal" text-anchor="start" textLength="12" lengthAdjust="spacingAndGlyphs">Man</text>
<rect x="707" y="298" width="21" height="11" fill="#ffffff" />
<rect x="707" y="298" width="20" height="10" fill="#808080" />
<rect x="708" y="299" width="19" height="9" fill="#c0c0c0" />
<rect x="708" y="299" width="18" height="8" fill="#b8b8c0" />
<text x="707.8" y="307.8" font-family="Liberation Sans" font-size="10" fill="#2828ff" font-weight="normal" text-anchor="start" textLength="19.5" lengthAdjust="spacingAndGlyphs">Auto</text>
<rect x="729" y="298" width="11" height="11" fill="#000000" />
<rect x="729" y="298" width="10" height="10" fill="#ffffff" />
<rect x="730" y="299" width="9" height="9" fill="#808080" />
<rect x="730" y="299" width="8" height="8" fill="#c0c0c0" />
<polygon points="730.5,300.5 738.5,300.5 734.5,305.5" fill="#909090"/>
<text x="742" y="276" font-family="Liberation Mono" font-size="11" fill="#00e0e0" font-weight="bold" text-anchor="start" textLength="285" lengthAdjust="spacingAndGlyphs">Xa: 1.000m  Xb: 0.000   a-b: 1.000m freq: 1</text>
<text x="742" y="289" font-family="Liberation Mono" font-size="11" fill="#00e0e0" font-weight="bold" text-anchor="start" textLength="231" lengthAdjust="spacingAndGlyphs">Yc: 120.0m  Yd: 0.000   c-d: 120.0m</text>
<rect x="694" y="318" width="29" height="2" fill="#f0e800" />
<text x="694" y="329" font-family="Liberation Mono" font-size="10" fill="#f0e800" font-weight="bold" text-anchor="start" >A</text>
<rect x="694" y="333" width="29" height="2" fill="#00e000" />
<text x="694" y="344" font-family="Liberation Mono" font-size="10" fill="#00e000" font-weight="bold" text-anchor="start" >B</text>
<line x1="763.5" y1="324.5" x2="763.5" y2="548.5" stroke="#a0a0a0" stroke-width="1.3" />
<line x1="763.5" y1="324.5" x2="988" y2="324.5" stroke="#a0a0a0" stroke-width="1.3" />
<line x1="800.9166666666666" y1="324.5" x2="800.9166666666666" y2="548.5" stroke="#a0a0a0" stroke-width="1.3" />
<line x1="763.5" y1="361.8333333333333" x2="988" y2="361.8333333333333" stroke="#a0a0a0" stroke-width="1.3" />
<line x1="838.3333333333334" y1="324.5" x2="838.3333333333334" y2="548.5" stroke="#a0a0a0" stroke-width="1.3" />
<line x1="763.5" y1="399.1666666666667" x2="988" y2="399.1666666666667" stroke="#a0a0a0" stroke-width="1.3" />
<line x1="875.75" y1="324.5" x2="875.75" y2="548.5" stroke="#a0a0a0" stroke-width="1.3" />
<line x1="763.5" y1="436.5" x2="988" y2="436.5" stroke="#a0a0a0" stroke-width="1.3" />
<line x1="913.1666666666666" y1="324.5" x2="913.1666666666666" y2="548.5" stroke="#a0a0a0" stroke-width="1.3" />
<line x1="763.5" y1="473.83333333333337" x2="988" y2="473.83333333333337" stroke="#a0a0a0" stroke-width="1.3" />
<line x1="950.5833333333334" y1="324.5" x2="950.5833333333334" y2="548.5" stroke="#a0a0a0" stroke-width="1.3" />
<line x1="763.5" y1="511.16666666666663" x2="988" y2="511.16666666666663" stroke="#a0a0a0" stroke-width="1.3" />
<line x1="988.0" y1="324.5" x2="988.0" y2="548.5" stroke="#a0a0a0" stroke-width="1.3" />
<line x1="763.5" y1="548.5" x2="988" y2="548.5" stroke="#a0a0a0" stroke-width="1.3" />
<line x1="763.5" y1="321.5" x2="988" y2="321.5" stroke="#a0a0a0" stroke-width="1" />
<line x1="763.5" y1="331.96666666666664" x2="768.5" y2="331.96666666666664" stroke="#a0a0a0" stroke-width="1.3" />
<line x1="770.9833333333333" y1="543.5" x2="770.9833333333333" y2="548.5" stroke="#a0a0a0" stroke-width="1.3" />
<line x1="763.5" y1="339.43333333333334" x2="768.5" y2="339.43333333333334" stroke="#a0a0a0" stroke-width="1.3" />
<line x1="778.4666666666667" y1="543.5" x2="778.4666666666667" y2="548.5" stroke="#a0a0a0" stroke-width="1.3" />
<line x1="763.5" y1="346.9" x2="768.5" y2="346.9" stroke="#a0a0a0" stroke-width="1.3" />
<line x1="785.95" y1="543.5" x2="785.95" y2="548.5" stroke="#a0a0a0" stroke-width="1.3" />
<line x1="763.5" y1="354.3666666666667" x2="768.5" y2="354.3666666666667" stroke="#a0a0a0" stroke-width="1.3" />
<line x1="793.4333333333333" y1="543.5" x2="793.4333333333333" y2="548.5" stroke="#a0a0a0" stroke-width="1.3" />
<line x1="763.5" y1="369.3" x2="768.5" y2="369.3" stroke="#a0a0a0" stroke-width="1.3" />
<line x1="808.4" y1="543.5" x2="808.4" y2="548.5" stroke="#a0a0a0" stroke-width="1.3" />
<line x1="763.5" y1="376.76666666666665" x2="768.5" y2="376.76666666666665" stroke="#a0a0a0" stroke-width="1.3" />
<line x1="815.8833333333333" y1="543.5" x2="815.8833333333333" y2="548.5" stroke="#a0a0a0" stroke-width="1.3" />
<line x1="763.5" y1="384.23333333333335" x2="768.5" y2="384.23333333333335" stroke="#a0a0a0" stroke-width="1.3" />
<line x1="823.3666666666667" y1="543.5" x2="823.3666666666667" y2="548.5" stroke="#a0a0a0" stroke-width="1.3" />
<line x1="763.5" y1="391.7" x2="768.5" y2="391.7" stroke="#a0a0a0" stroke-width="1.3" />
<line x1="830.85" y1="543.5" x2="830.85" y2="548.5" stroke="#a0a0a0" stroke-width="1.3" />
<line x1="763.5" y1="406.6333333333333" x2="768.5" y2="406.6333333333333" stroke="#a0a0a0" stroke-width="1.3" />
<line x1="845.8166666666666" y1="543.5" x2="845.8166666666666" y2="548.5" stroke="#a0a0a0" stroke-width="1.3" />
<line x1="763.5" y1="414.1" x2="768.5" y2="414.1" stroke="#a0a0a0" stroke-width="1.3" />
<line x1="853.3" y1="543.5" x2="853.3" y2="548.5" stroke="#a0a0a0" stroke-width="1.3" />
<line x1="763.5" y1="421.56666666666666" x2="768.5" y2="421.56666666666666" stroke="#a0a0a0" stroke-width="1.3" />
<line x1="860.7833333333333" y1="543.5" x2="860.7833333333333" y2="548.5" stroke="#a0a0a0" stroke-width="1.3" />
<line x1="763.5" y1="429.0333333333333" x2="768.5" y2="429.0333333333333" stroke="#a0a0a0" stroke-width="1.3" />
<line x1="868.2666666666667" y1="543.5" x2="868.2666666666667" y2="548.5" stroke="#a0a0a0" stroke-width="1.3" />
<line x1="763.5" y1="443.9666666666667" x2="768.5" y2="443.9666666666667" stroke="#a0a0a0" stroke-width="1.3" />
<line x1="883.2333333333333" y1="543.5" x2="883.2333333333333" y2="548.5" stroke="#a0a0a0" stroke-width="1.3" />
<line x1="763.5" y1="451.43333333333334" x2="768.5" y2="451.43333333333334" stroke="#a0a0a0" stroke-width="1.3" />
<line x1="890.7166666666667" y1="543.5" x2="890.7166666666667" y2="548.5" stroke="#a0a0a0" stroke-width="1.3" />
<line x1="763.5" y1="458.9" x2="768.5" y2="458.9" stroke="#a0a0a0" stroke-width="1.3" />
<line x1="898.2" y1="543.5" x2="898.2" y2="548.5" stroke="#a0a0a0" stroke-width="1.3" />
<line x1="763.5" y1="466.3666666666667" x2="768.5" y2="466.3666666666667" stroke="#a0a0a0" stroke-width="1.3" />
<line x1="905.6833333333334" y1="543.5" x2="905.6833333333334" y2="548.5" stroke="#a0a0a0" stroke-width="1.3" />
<line x1="763.5" y1="481.3" x2="768.5" y2="481.3" stroke="#a0a0a0" stroke-width="1.3" />
<line x1="920.65" y1="543.5" x2="920.65" y2="548.5" stroke="#a0a0a0" stroke-width="1.3" />
<line x1="763.5" y1="488.76666666666665" x2="768.5" y2="488.76666666666665" stroke="#a0a0a0" stroke-width="1.3" />
<line x1="928.1333333333333" y1="543.5" x2="928.1333333333333" y2="548.5" stroke="#a0a0a0" stroke-width="1.3" />
<line x1="763.5" y1="496.23333333333335" x2="768.5" y2="496.23333333333335" stroke="#a0a0a0" stroke-width="1.3" />
<line x1="935.6166666666667" y1="543.5" x2="935.6166666666667" y2="548.5" stroke="#a0a0a0" stroke-width="1.3" />
<line x1="763.5" y1="503.7" x2="768.5" y2="503.7" stroke="#a0a0a0" stroke-width="1.3" />
<line x1="943.1" y1="543.5" x2="943.1" y2="548.5" stroke="#a0a0a0" stroke-width="1.3" />
<line x1="763.5" y1="518.6333333333333" x2="768.5" y2="518.6333333333333" stroke="#a0a0a0" stroke-width="1.3" />
<line x1="958.0666666666666" y1="543.5" x2="958.0666666666666" y2="548.5" stroke="#a0a0a0" stroke-width="1.3" />
<line x1="763.5" y1="526.1" x2="768.5" y2="526.1" stroke="#a0a0a0" stroke-width="1.3" />
<line x1="965.55" y1="543.5" x2="965.55" y2="548.5" stroke="#a0a0a0" stroke-width="1.3" />
<line x1="763.5" y1="533.5666666666666" x2="768.5" y2="533.5666666666666" stroke="#a0a0a0" stroke-width="1.3" />
<line x1="973.0333333333333" y1="543.5" x2="973.0333333333333" y2="548.5" stroke="#a0a0a0" stroke-width="1.3" />
<line x1="763.5" y1="541.0333333333333" x2="768.5" y2="541.0333333333333" stroke="#a0a0a0" stroke-width="1.3" />
<line x1="980.5166666666667" y1="543.5" x2="980.5166666666667" y2="548.5" stroke="#a0a0a0" stroke-width="1.3" />
<text x="762" y="328.5" font-family="Liberation Mono" font-size="10.5" fill="#00e0e0" font-weight="bold" text-anchor="end" >120m</text>
<text x="762" y="365.8333333333333" font-family="Liberation Mono" font-size="10.5" fill="#00e0e0" font-weight="bold" text-anchor="end" >100m</text>
<text x="762" y="403.1666666666667" font-family="Liberation Mono" font-size="10.5" fill="#00e0e0" font-weight="bold" text-anchor="end" >80m</text>
<text x="762" y="440.5" font-family="Liberation Mono" font-size="10.5" fill="#00e0e0" font-weight="bold" text-anchor="end" >60m</text>
<text x="762" y="477.83333333333337" font-family="Liberation Mono" font-size="10.5" fill="#00e0e0" font-weight="bold" text-anchor="end" >40m</text>
<text x="762" y="515.1666666666666" font-family="Liberation Mono" font-size="10.5" fill="#00e0e0" font-weight="bold" text-anchor="end" >20m</text>
<text x="762" y="552.5" font-family="Liberation Mono" font-size="10.5" fill="#00e0e0" font-weight="bold" text-anchor="end" >0</text>
<text x="763.5" y="563" font-family="Liberation Mono" font-size="10.5" fill="#00e0e0" font-weight="bold" text-anchor="middle" >0</text>
<text x="800.9166666666666" y="563" font-family="Liberation Mono" font-size="10.5" fill="#00e0e0" font-weight="bold" text-anchor="middle" >167u</text>
<text x="838.3333333333334" y="563" font-family="Liberation Mono" font-size="10.5" fill="#00e0e0" font-weight="bold" text-anchor="middle" >333u</text>
<text x="875.75" y="563" font-family="Liberation Mono" font-size="10.5" fill="#00e0e0" font-weight="bold" text-anchor="middle" >500u</text>
<text x="913.1666666666666" y="563" font-family="Liberation Mono" font-size="10.5" fill="#00e0e0" font-weight="bold" text-anchor="middle" >667u</text>
<text x="950.5833333333334" y="563" font-family="Liberation Mono" font-size="10.5" fill="#00e0e0" font-weight="bold" text-anchor="middle" >833u</text>
<text x="988.0" y="563" font-family="Liberation Mono" font-size="10.5" fill="#00e0e0" font-weight="bold" text-anchor="middle" >1m</text>
<text x="772" y="575" font-family="Liberation Mono" font-size="11" fill="#00e0e0" font-weight="bold" text-anchor="start" textLength="208" lengthAdjust="spacingAndGlyphs">Ref=Ground  X=167u/Div Y=current</text>
<polyline points="763.5,521.94 764.0,521.08 764.5,520.21 765.0,519.31 765.5,518.4 766.01,517.47 766.51,516.53 767.01,515.56 767.51,514.59 768.01,513.59 768.51,512.58 769.01,511.56 769.51,510.53 770.01,509.48 770.52,508.42 771.02,507.34 771.52,506.26 772.02,505.17 772.52,504.07 773.02,502.95 773.52,501.83 774.02,500.71 774.52,499.57 775.03,498.44 775.53,497.29 776.03,496.14 776.53,494.99 777.03,493.83 777.53,492.68 778.03,491.52 778.53,490.36 779.03,489.2 779.54,488.03 780.04,486.88 780.54,485.72 781.04,484.56 781.54,483.41 782.04,482.26 782.54,481.12 783.04,479.98 783.54,478.84 784.05,477.71 784.55,476.59 785.05,475.47 785.55,474.37 786.05,473.27 786.55,472.17 787.05,471.09 787.55,470.02 788.05,468.95 788.56,467.9 789.06,466.85 789.56,465.82 790.06,464.8 790.56,463.79 791.06,462.8 791.56,461.81 792.06,460.84 792.56,459.88 793.07,458.94 793.57,458.01 794.07,457.09 794.57,456.19 795.07,455.31 795.57,454.44 796.07,453.58 796.57,452.74 797.07,451.92 797.58,451.11 798.08,450.32 798.58,449.55 799.08,448.79 799.58,448.05 800.08,447.33 800.58,446.62 801.08,445.94 801.58,445.27 802.09,444.62 802.59,443.99 803.09,443.38 803.59,442.78 804.09,442.21 804.59,441.65 805.09,441.12 805.59,440.6 806.09,440.1 806.6,439.63 807.1,439.17 807.6,438.73 808.1,438.32 808.6,437.92 809.1,437.54 809.6,437.19 810.1,436.85 810.6,436.54 811.11,436.24 811.61,435.97 812.11,435.72 812.61,435.48 813.11,435.27 813.61,435.08 814.11,434.92 814.61,434.77 815.11,434.64 815.62,434.54 816.12,434.45 816.62,434.39 817.12,434.35 817.62,434.33 818.12,434.33 818.62,434.35 819.12,434.4 819.62,434.46 820.13,434.55 820.63,434.66 821.13,434.79 821.63,434.94 822.13,435.11 822.63,435.3 823.13,435.51 823.63,435.75 824.14,436.0 824.64,436.28 825.14,436.58 825.64,436.89 826.14,437.23 826.64,437.59 827.14,437.97 827.64,438.37 828.14,438.79 828.65,439.23 829.15,439.69 829.65,440.17 830.15,440.67 830.65,441.19 831.15,441.72 831.65,442.28 832.15,442.86 832.65,443.46 833.16,444.07 833.66,444.7 834.16,445.36 834.66,446.03 835.16,446.72 835.66,447.42 836.16,448.15 836.66,448.89 837.16,449.65 837.67,450.42 838.17,451.21 838.67,452.02 839.17,452.85 839.67,453.69 840.17,454.55 840.67,455.42 841.17,456.31 841.67,457.21 842.18,458.13 842.68,459.06 843.18,460.01 843.68,460.97 844.18,461.94 844.68,462.93 845.18,463.92 845.68,464.93 846.18,465.96 846.69,466.99 847.19,468.03 847.69,469.09 848.19,470.16 848.69,471.23 849.19,472.31 849.69,473.41 850.19,474.51 850.69,475.62 851.2,476.74 851.7,477.86 852.2,478.99 852.7,480.12 853.2,481.27 853.7,482.41 854.2,483.56 854.7,484.71 855.2,485.87 855.71,487.03 856.21,488.19 856.71,489.35 857.21,490.51 857.71,491.67 858.21,492.83 858.71,493.98 859.21,495.14 859.71,496.29 860.22,497.44 860.72,498.58 861.22,499.72 861.72,500.85 862.22,501.98 862.72,503.1 863.22,504.21 863.72,505.31 864.22,506.4 864.73,507.48 865.23,508.56 865.73,509.61 866.23,510.66 866.73,511.7 867.23,512.72 867.73,513.72 868.23,514.71 868.73,515.69 869.24,516.65 869.74,517.59 870.24,518.52 870.74,519.43 871.24,520.32 871.74,521.2 872.24,522.05 872.74,522.89 873.24,523.71 873.75,524.5 874.25,525.28 874.75,526.04 875.25,526.78 875.75,527.5 876.25,528.2 876.75,528.88 877.25,529.54 877.75,530.18 878.26,530.8 878.76,531.41 879.26,531.99 879.76,532.55 880.26,533.1 880.76,533.62 881.26,534.13 881.76,534.62 882.26,535.09 882.77,535.55 883.27,535.99 883.77,536.41 884.27,536.81 884.77,537.2 885.27,537.58 885.77,537.94 886.27,538.28 886.77,538.61 887.28,538.93 887.78,539.24 888.28,539.53 888.78,539.81 889.28,540.08 889.78,540.33 890.28,540.58 890.78,540.82 891.28,541.04 891.79,541.26 892.29,541.46 892.79,541.66 893.29,541.85 893.79,542.02 894.29,542.2 894.79,542.36 895.29,542.52 895.79,542.67 896.3,542.81 896.8,542.94 897.3,543.07 897.8,543.2 898.3,543.32 898.8,543.43 899.3,543.54 899.8,543.64 900.3,543.74 900.81,543.83 901.31,543.92 901.81,544.01 902.31,544.09 902.81,544.17 903.31,544.24 903.81,544.31 904.31,544.38 904.81,544.45 905.32,544.51 905.82,544.57 906.32,544.62 906.82,544.68 907.32,544.73 907.82,544.78 908.32,544.82 908.82,544.87 909.32,544.91 909.83,544.95 910.33,544.99 910.83,545.02 911.33,545.06 911.83,545.09 912.33,545.12 912.83,545.15 913.33,545.18 913.83,545.21 914.34,545.24 914.84,545.26 915.34,545.28 915.84,545.31 916.34,545.33 916.84,545.35 917.34,545.37 917.84,545.39 918.34,545.4 918.85,545.42 919.35,545.43 919.85,545.45 920.35,545.46 920.85,545.47 921.35,545.49 921.85,545.5 922.35,545.51 922.85,545.52 923.36,545.53 923.86,545.53 924.36,545.54 924.86,545.55 925.36,545.55 925.86,545.56 926.36,545.56 926.86,545.57 927.36,545.57 927.87,545.58 928.37,545.58 928.87,545.58 929.37,545.58 929.87,545.58 930.37,545.58 930.87,545.58 931.37,545.58 931.88,545.58 932.38,545.58 932.88,545.57 933.38,545.57 933.88,545.56 934.38,545.56 934.88,545.55 935.38,545.55 935.88,545.54 936.39,545.53 936.89,545.52 937.39,545.52 937.89,545.51 938.39,545.5 938.89,545.48 939.39,545.47 939.89,545.46 940.39,545.45 940.9,545.43 941.4,545.42 941.9,545.4 942.4,545.38 942.9,545.36 943.4,545.35 943.9,545.33 944.4,545.3 944.9,545.28 945.41,545.26 945.91,545.23 946.41,545.21 946.91,545.18 947.41,545.15 947.91,545.12 948.41,545.09 948.91,545.05 949.41,545.02 949.92,544.98 950.42,544.94 950.92,544.9 951.42,544.86 951.92,544.82 952.42,544.77 952.92,544.72 953.42,544.67 953.92,544.62 954.43,544.56 954.93,544.5 955.43,544.44 955.93,544.37 956.43,544.3 956.93,544.23 957.43,544.16 957.93,544.08 958.43,544.0 958.94,543.91 959.44,543.82 959.94,543.73 960.44,543.63 960.94,543.53 961.44,543.42 961.94,543.3 962.44,543.18 962.94,543.06 963.45,542.93 963.95,542.79 964.45,542.65 964.95,542.5 965.45,542.34 965.95,542.17 966.45,542.0 966.95,541.82 967.45,541.63 967.96,541.43 968.46,541.23 968.96,541.01 969.46,540.79 969.96,540.55 970.46,540.3 970.96,540.04 971.46,539.77 971.96,539.49 972.47,539.2 972.97,538.89 973.47,538.57 973.97,538.24 974.47,537.89 974.97,537.53 975.47,537.15 975.97,536.76 976.47,536.35 976.98,535.93 977.48,535.49 977.98,535.03 978.48,534.56 978.98,534.07 979.48,533.55 979.98,533.03 980.48,532.48 980.98,531.91 981.49,531.33 981.99,530.72 982.49,530.1 982.99,529.46 983.49,528.79 983.99,528.11 984.49,527.41 984.99,526.69 985.49,525.95 986.0,525.18 986.5,524.4 987.0,523.6 987.5,522.78 988.0,521.94" stroke="#18e018" stroke-width="1.6" fill="none" />
<polyline points="763.5,531.56 764.0,532.21 764.5,532.85 765.0,533.46 765.5,534.06 766.01,534.63 766.51,535.19 767.01,535.72 767.51,536.24 768.01,536.73 768.51,537.21 769.01,537.67 769.51,538.11 770.01,538.53 770.52,538.93 771.02,539.32 771.52,539.69 772.02,540.04 772.52,540.38 773.02,540.7 773.52,541.01 774.02,541.3 774.52,541.58 775.03,541.85 775.53,542.1 776.03,542.34 776.53,542.57 777.03,542.79 777.53,542.99 778.03,543.19 778.53,543.37 779.03,543.55 779.54,543.72 780.04,543.87 780.54,544.02 781.04,544.17 781.54,544.3 782.04,544.43 782.54,544.55 783.04,544.66 783.54,544.77 784.05,544.87 784.55,544.97 785.05,545.06 785.55,545.15 786.05,545.23 786.55,545.31 787.05,545.38 787.55,545.45 788.05,545.52 788.56,545.58 789.06,545.64 789.56,545.7 790.06,545.75 790.56,545.8 791.06,545.85 791.56,545.89 792.06,545.93 792.56,545.97 793.07,546.01 793.57,546.05 794.07,546.08 794.57,546.12 795.07,546.15 795.57,546.18 796.07,546.2 796.57,546.23 797.07,546.25 797.58,546.28 798.08,546.3 798.58,546.32 799.08,546.34 799.58,546.36 800.08,546.38 800.58,546.4 801.08,546.41 801.58,546.43 802.09,546.44 802.59,546.46 803.09,546.47 803.59,546.48 804.09,546.49 804.59,546.5 805.09,546.52 805.59,546.53 806.09,546.53 806.6,546.54 807.1,546.55 807.6,546.56 808.1,546.57 808.6,546.57 809.1,546.58 809.6,546.59 810.1,546.59 810.6,546.6 811.11,546.6 811.61,546.61 812.11,546.61 812.61,546.62 813.11,546.62 813.61,546.62 814.11,546.63 814.61,546.63 815.11,546.63 815.62,546.63 816.12,546.64 816.62,546.64 817.12,546.64 817.62,546.64 818.12,546.64 818.62,546.64 819.12,546.64 819.62,546.64 820.13,546.64 820.63,546.64 821.13,546.64 821.63,546.64 822.13,546.64 822.63,546.64 823.13,546.64 823.63,546.63 824.14,546.63 824.64,546.63 825.14,546.63 825.64,546.62 826.14,546.62 826.64,546.62 827.14,546.61 827.64,546.61 828.14,546.6 828.65,546.6 829.15,546.59 829.65,546.59 830.15,546.58 830.65,546.57 831.15,546.57 831.65,546.56 832.15,546.55 832.65,546.54 833.16,546.53 833.66,546.53 834.16,546.52 834.66,546.5 835.16,546.49 835.66,546.48 836.16,546.47 836.66,546.46 837.16,546.44 837.67,546.43 838.17,546.41 838.67,546.4 839.17,546.38 839.67,546.36 840.17,546.34 840.67,546.32 841.17,546.3 841.67,546.28 842.18,546.25 842.68,546.23 843.18,546.2 843.68,546.18 844.18,546.15 844.68,546.12 845.18,546.08 845.68,546.05 846.18,546.01 846.69,545.97 847.19,545.93 847.69,545.89 848.19,545.85 848.69,545.8 849.19,545.75 849.69,545.7 850.19,545.64 850.69,545.58 851.2,545.52 851.7,545.45 852.2,545.38 852.7,545.31 853.2,545.23 853.7,545.15 854.2,545.06 854.7,544.97 855.2,544.87 855.71,544.77 856.21,544.66 856.71,544.55 857.21,544.43 857.71,544.3 858.21,544.17 858.71,544.02 859.21,543.87 859.71,543.72 860.22,543.55 860.72,543.37 861.22,543.19 861.72,542.99 862.22,542.79 862.72,542.57 863.22,542.34 863.72,542.1 864.22,541.85 864.73,541.58 865.23,541.3 865.73,541.01 866.23,540.7 866.73,540.38 867.23,540.04 867.73,539.69 868.23,539.32 868.73,538.93 869.24,538.53 869.74,538.11 870.24,537.67 870.74,537.21 871.24,536.73 871.74,536.24 872.24,535.72 872.74,535.19 873.24,534.63 873.75,534.06 874.25,533.46 874.75,532.85 875.25,532.21 875.75,531.56 876.25,530.88 876.75,530.19 877.25,529.47 877.75,528.74 878.26,527.99 878.76,527.22 879.26,526.43 879.76,525.62 880.26,524.8 880.76,523.95 881.26,523.1 881.76,522.22 882.26,521.34 882.77,520.43 883.27,519.52 883.77,518.59 884.27,517.65 884.77,516.7 885.27,515.73 885.77,514.76 886.27,513.78 886.77,512.79 887.28,511.79 887.78,510.78 888.28,509.77 888.78,508.75 889.28,507.73 889.78,506.7 890.28,505.67 890.78,504.64 891.28,503.61 891.79,502.57 892.29,501.54 892.79,500.5 893.29,499.46 893.79,498.43 894.29,497.4 894.79,496.37 895.29,495.34 895.79,494.32 896.3,493.3 896.8,492.29 897.3,491.28 897.8,490.28 898.3,489.28 898.8,488.29 899.3,487.3 899.8,486.33 900.3,485.36 900.81,484.4 901.31,483.45 901.81,482.51 902.31,481.58 902.81,480.65 903.31,479.74 903.81,478.84 904.31,477.95 904.81,477.07 905.32,476.2 905.82,475.34 906.32,474.5 906.82,473.66 907.32,472.84 907.82,472.04 908.32,471.24 908.82,470.46 909.32,469.7 909.83,468.94 910.33,468.2 910.83,467.48 911.33,466.77 911.83,466.07 912.33,465.39 912.83,464.72 913.33,464.07 913.83,463.43 914.34,462.81 914.84,462.21 915.34,461.62 915.84,461.05 916.34,460.49 916.84,459.95 917.34,459.42 917.84,458.92 918.34,458.43 918.85,457.95 919.35,457.49 919.85,457.05 920.35,456.63 920.85,456.23 921.35,455.84 921.85,455.47 922.35,455.11 922.85,454.78 923.36,454.46 923.86,454.16 924.36,453.88 924.86,453.61 925.36,453.36 925.86,453.14 926.36,452.93 926.86,452.73 927.36,452.56 927.87,452.4 928.37,452.27 928.87,452.15 929.37,452.05 929.87,451.96 930.37,451.9 930.87,451.85 931.37,451.82 931.88,451.82 932.38,451.82 932.88,451.85 933.38,451.9 933.88,451.96 934.38,452.05 934.88,452.15 935.38,452.27 935.88,452.4 936.39,452.56 936.89,452.73 937.39,452.93 937.89,453.14 938.39,453.36 938.89,453.61 939.39,453.88 939.89,454.16 940.39,454.46 940.9,454.78 941.4,455.11 941.9,455.47 942.4,455.84 942.9,456.23 943.4,456.63 943.9,457.05 944.4,457.49 944.9,457.95 945.41,458.43 945.91,458.92 946.41,459.42 946.91,459.95 947.41,460.49 947.91,461.05 948.41,461.62 948.91,462.21 949.41,462.81 949.92,463.43 950.42,464.07 950.92,464.72 951.42,465.39 951.92,466.07 952.42,466.77 952.92,467.48 953.42,468.2 953.92,468.94 954.43,469.7 954.93,470.46 955.43,471.24 955.93,472.04 956.43,472.84 956.93,473.66 957.43,474.5 957.93,475.34 958.43,476.2 958.94,477.07 959.44,477.95 959.94,478.84 960.44,479.74 960.94,480.65 961.44,481.58 961.94,482.51 962.44,483.45 962.94,484.4 963.45,485.36 963.95,486.33 964.45,487.3 964.95,488.29 965.45,489.28 965.95,490.28 966.45,491.28 966.95,492.29 967.45,493.3 967.96,494.32 968.46,495.34 968.96,496.37 969.46,497.4 969.96,498.43 970.46,499.46 970.96,500.5 971.46,501.54 971.96,502.57 972.47,503.61 972.97,504.64 973.47,505.67 973.97,506.7 974.47,507.73 974.97,508.75 975.47,509.77 975.97,510.78 976.47,511.79 976.98,512.79 977.48,513.78 977.98,514.76 978.48,515.73 978.98,516.7 979.48,517.65 979.98,518.59 980.48,519.52 980.98,520.43 981.49,521.34 981.99,522.22 982.49,523.1 982.99,523.95 983.49,524.8 983.99,525.62 984.49,526.43 984.99,527.22 985.49,527.99 986.0,528.74 986.5,529.47 987.0,530.19 987.5,530.88 988.0,531.56" stroke="#f0f020" stroke-width="1.6" fill="none" />
<polygon points="763.5,323.5 757.5,317.5 757.5,310.0 769.5,310.0 769.5,317.5" fill="#000" stroke="#b0b0b0" stroke-width="1.3"/>
<text x="763.5" y="318.0" font-family="Liberation Mono" font-size="10" fill="#00e0e0" font-weight="bold" text-anchor="middle" >b</text>
<polygon points="988,323.5 982,317.5 982,310.0 994,310.0 994,317.5" fill="#000" stroke="#b0b0b0" stroke-width="1.3"/>
<text x="988" y="318.0" font-family="Liberation Mono" font-size="10" fill="#00e0e0" font-weight="bold" text-anchor="middle" >a</text>
<polygon points="988,324.5 994,318.5 1004.5,318.5 1004.5,330.5 994,330.5" fill="#000" stroke="#b0b0b0" stroke-width="1.3"/>
<text x="999.5" y="328.0" font-family="Liberation Mono" font-size="10" fill="#00e0e0" font-weight="bold" text-anchor="middle" >c</text>
<polygon points="988,548.5 994,542.5 1004.5,542.5 1004.5,554.5 994,554.5" fill="#000" stroke="#b0b0b0" stroke-width="1.3"/>
<text x="999.5" y="552.0" font-family="Liberation Mono" font-size="10" fill="#00e0e0" font-weight="bold" text-anchor="middle" >d</text>
</svg></body></html>
